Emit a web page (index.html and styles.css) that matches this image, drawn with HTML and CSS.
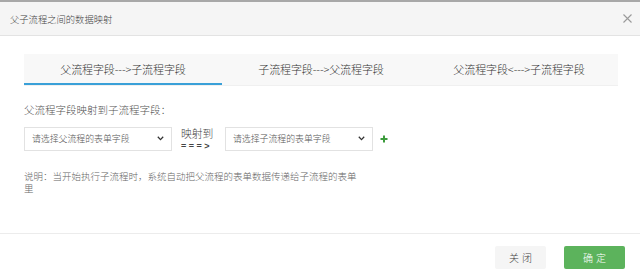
FILE: index.html
```html
<!DOCTYPE html>
<html lang="zh-CN">
<head>
<meta charset="utf-8">
<title>父子流程之间的数据映射</title>
<link rel="stylesheet" href="styles.css">
</head>
<body>
<div class="modal">
  <div class="modal-header">
    <span class="modal-title">父子流程之间的数据映射</span>
    <svg class="close" width="9" height="9" viewBox="0 0 9 9"><path d="M0.5 0.5L8.5 8.5M8.5 0.5L0.5 8.5" stroke="#9a9a9a" stroke-width="1.1" fill="none"/></svg>
  </div>
  <div class="modal-body">
    <div class="tabs">
      <div class="tab active">父流程字段---&gt;子流程字段</div>
      <div class="tab">子流程字段---&gt;父流程字段</div>
      <div class="tab">父流程字段&lt;---&gt;子流程字段</div>
    </div>
    <div class="map-label">父流程字段映射到子流程字段：</div>
    <div class="map-row">
      <div class="select"><span>请选择父流程的表单字段</span><svg width="7" height="5" viewBox="0 0 7 5"><path d="M0.8 0.8L3.5 3.6L6.2 0.8" stroke="#333" stroke-width="1.3" fill="none"/></svg></div>
      <div class="arrow"><span class="arrow-top">映射到</span><span class="arrow-bot">===&gt;</span></div>
      <div class="select"><span>请选择子流程的表单字段</span><svg width="7" height="5" viewBox="0 0 7 5"><path d="M0.8 0.8L3.5 3.6L6.2 0.8" stroke="#333" stroke-width="1.3" fill="none"/></svg></div>
      <svg class="plus" width="8" height="8" viewBox="0 0 8 8"><path d="M4 0.5V7.5M0.5 4H7.5" stroke="#3c9b3c" stroke-width="2" fill="none"/></svg>
    </div>
    <p class="note">说明：当开始执行子流程时，系统自动把父流程的表单数据传递给子流程的表单里</p>
  </div>
  <div class="modal-footer">
    <button class="btn btn-default">关闭</button>
    <button class="btn btn-primary">确定</button>
  </div>
</div>
</body>
</html>
```
FILE: styles.css
```css
* { box-sizing: border-box; }
html, body {
  margin: 0;
  padding: 0;
  background: #fff;
}
body {
  font-family: "Noto Sans CJK SC", "Noto Sans", sans-serif;
  font-weight: 300;
  color: #333;
  width: 640px;
  height: 277px;
  overflow: hidden;
}
.modal {
  border-top: 2px solid #a8a8a8;
  height: 277px;
  display: flex;
  flex-direction: column;
}
.modal-header {
  height: 34px;
  background: #f5f5f5;
  border-bottom: 1px solid #e3e3e3;
  display: flex;
  align-items: center;
  justify-content: space-between;
  padding: 0 8px 0 10px;
}
.modal-title {
  font-size: 9.3px;
  color: #444;
}
.close { display: block; }
.modal-body {
  padding: 18px 22px 0 24px;
  height: 198px;
  border-bottom: 1px solid #ececec;
}
.tabs {
  display: flex;
  background: #f8f8f8;
  height: 31px;
  box-shadow: 0 1px 0 #f0f0f0;
}
.tab {
  flex: 1;
  text-align: center;
  font-size: 11px;
  line-height: 31px;
  color: #333;
  letter-spacing: -0.1px;
}
.tab.active {
  border-bottom: 2px solid #3aa0d8;
  line-height: 30px;
}
.map-label {
  margin-top: 18px;
  font-size: 10.5px;
  line-height: 14px;
  color: #555;
}
.map-row {
  display: flex;
  align-items: center;
  margin-top: 9px;
}
.select {
  width: 148px;
  height: 24px;
  border: 1px solid #e2e2e2;
  display: flex;
  align-items: center;
  justify-content: space-between;
  padding: 0 7px 0 7px;
  font-size: 8.9px;
  color: #555;
}
.select svg { display: block; }
.arrow {
  display: flex;
  flex-direction: column;
  width: 53px;
  padding-left: 9px;
  font-size: 10.8px;
  color: #444;
}
.arrow-top { line-height: 15px; }
.arrow-bot {
  line-height: 10px;
  font-family: "Liberation Sans", sans-serif;
  font-size: 9px;
  font-weight: bold;
  letter-spacing: 2.5px;
  color: #444;
}
.plus {
  display: block;
  margin-left: 7px;
}
.note {
  margin: 19px 0 0 0;
  width: 336px;
  font-size: 9.5px;
  line-height: 12px;
  color: #666;
}
.modal-footer {
  display: flex;
  justify-content: flex-end;
  align-items: flex-start;
  padding: 12px 15px 0 0;
  gap: 18px;
}
.btn {
  height: 23px;
  border: none;
  border-radius: 2px;
  font-family: "Noto Sans CJK SC", sans-serif;
  font-weight: 300;
  font-size: 10px;
  letter-spacing: 3px;
  padding: 0 0 0 3px;
  cursor: pointer;
}
.btn-default {
  width: 51px;
  background: #f5f5f5;
  color: #444;
}
.btn-primary {
  width: 61px;
  background: #5cb35c;
  color: #fff;
}
```
